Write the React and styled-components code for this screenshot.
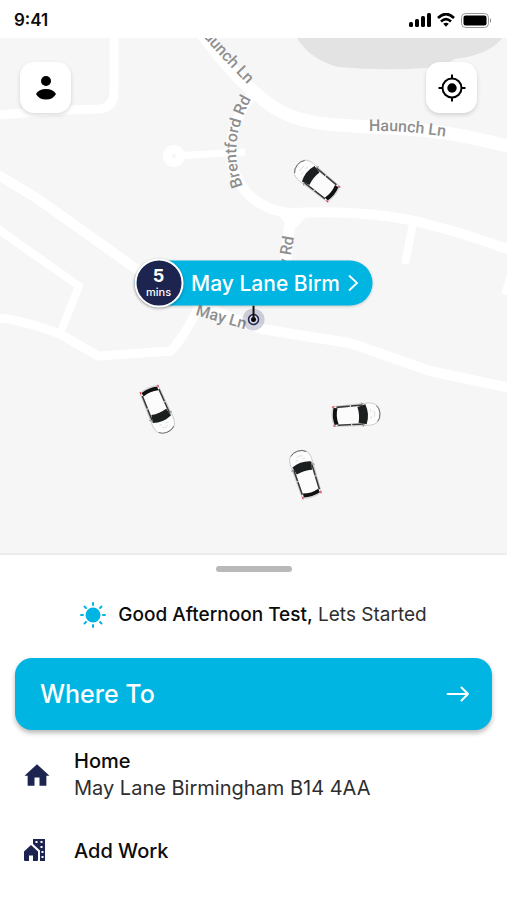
import styled, { createGlobalStyle, css } from "styled-components";

const colors = {
  accent: "#00b5e2",
  navy: "#1d2450",
  text: "#0c0c0c",
  subtle: "#2e2e2e",
  map: "#f6f6f6",
  park: "#e3e3e3",
  road: "#ffffff",
  roadLabel: "#8f8f8f",
};

const GlobalStyles = createGlobalStyle`
  body {
    margin: 0;
    font-family: Inter, "Liberation Sans", sans-serif;
    background-color: #fff;
    color: ${colors.text};
  }
  *, *:before, *:after {
    box-sizing: border-box;
  }
  button {
    margin: 0;
    border: 0;
    font: inherit;
    color: inherit;
    cursor: pointer;
  }
  svg {
    display: block;
    flex-shrink: 0;
  }
`;

const Page = styled.div`
  display: flex;
  flex-direction: column;
  min-height: 100vh;
`;

const StatusBar = styled.header`
  display: flex;
  align-items: center;
  justify-content: space-between;
  height: 38px;
  padding: 2px 15px 0 14px;
`;

const Clock = styled.time`
  font-size: 17px;
  font-weight: 600;
`;

const StatusIcons = styled.div`
  display: flex;
  align-items: center;
  gap: 6px;
`;

const MapArea = styled.main`
  position: relative;
  flex: 1;
  min-height: 320px;
  background-color: ${colors.map};
`;

const MapCanvas = styled.svg`
  position: absolute;
  width: 100%;
  height: 100%;
`;

const RoadLabel = styled.text`
  font-family: Roboto, sans-serif;
  font-size: 16px;
  font-weight: 500;
  fill: ${colors.roadLabel};
`;

const MapButton = styled.button`
  position: absolute;
  top: 24px;
  display: flex;
  align-items: center;
  justify-content: center;
  width: 51px;
  height: 51px;
  padding: 0;
  border-radius: 14px;
  background-color: #fff;
  box-shadow: 0 2px 4px rgba(0, 0, 0, 0.15);
  ${({ $side }) =>
    $side === "left"
      ? css`
          left: 20px;
        `
      : css`
          right: 30px;
        `}
`;

const Pickup = styled.div`
  position: absolute;
  top: 50%;
  left: 50%;
  display: flex;
  flex-direction: column;
  align-items: center;
  transform: translate(-50%, -50%);
`;

const PickupPill = styled.button`
  display: flex;
  align-items: center;
  gap: 8px;
  height: 45px;
  padding: 0 14px 0 0;
  border-radius: 23px;
  background-color: ${colors.accent};
  color: #fff;
  font-size: 21px;
  font-weight: 500;
  white-space: nowrap;
  box-shadow: 0 1px 3px rgba(0, 0, 0, 0.2);
`;

const Eta = styled.span`
  display: flex;
  flex-direction: column;
  align-items: center;
  justify-content: center;
  width: 49px;
  height: 49px;
  border: 2px solid #fff;
  border-radius: 50%;
  background-color: ${colors.navy};
  box-shadow: 0 1px 3px rgba(0, 0, 0, 0.3);
`;

const EtaValue = styled.strong`
  font-size: 18px;
  font-weight: 700;
  line-height: 19px;
`;

const EtaUnit = styled.span`
  font-size: 11px;
  line-height: 15px;
`;

const Sheet = styled.section`
  display: flex;
  flex-direction: column;
  padding: 11px 15px 34px;
  border-top: 2px solid #ececec;
  background-color: #fff;
`;

const Handle = styled.div`
  align-self: center;
  width: 76px;
  height: 6px;
  border-radius: 3px;
  background-color: #b9b9b9;
`;

const Greeting = styled.p`
  display: flex;
  align-items: center;
  justify-content: center;
  gap: 12px;
  margin: 30px 0;
  font-size: 19px;
  line-height: 26px;
  color: ${colors.subtle};
`;

const GreetingName = styled.strong`
  font-weight: 500;
  color: ${colors.text};
`;

const WhereTo = styled.button`
  display: flex;
  align-items: center;
  justify-content: space-between;
  height: 72px;
  padding: 0 22px 0 25px;
  border-radius: 17px;
  background-color: ${colors.accent};
  color: #fff;
  font-size: 25px;
  font-weight: 500;
  box-shadow: 0 3px 5px rgba(0, 0, 0, 0.28);
`;

const Places = styled.div`
  display: flex;
  flex-direction: column;
  gap: 34px;
  padding-top: 18px;
`;

const Place = styled.button`
  display: flex;
  align-items: center;
  gap: 22px;
  padding: 0 7px;
  background: none;
  text-align: left;
`;

const PlaceText = styled.span`
  display: flex;
  flex-direction: column;
  font-size: 20px;
  line-height: 27px;
`;

const PlaceName = styled.span`
  font-weight: 500;
`;

const PlaceAddress = styled.span`
  color: ${colors.subtle};
`;

const roads = [
  { d: "M114 30V92Q114 108 98 109Q50 110 0 115", width: 9 },
  { d: "M174 156L245 152", width: 7 },
  { d: "M196 24C222 62 246 88 272 106C296 124 330 125 370 127C430 129 462 134 515 148", width: 13 },
  { d: "M256 90C226 124 222 168 250 196Q268 212 292 213C350 210 400 216 430 225Q470 235 515 252", width: 10 },
  { d: "M291 213L281 300", width: 11 },
  { d: "M413 224L405 264", width: 8 },
  { d: "M512 272L505 295", width: 8 },
  { d: "M-5 173L38 199L135 268Q190 304 262 329Q310 337 350 343L430 371L515 389", width: 10 },
  { d: "M-5 227L79 286L60 334", width: 8 },
  { d: "M-5 318Q18 318 60 334L98 356L171 351Q186 334 198 308", width: 9 },
];

const cars = [
  { id: "a", x: 316, y: 180, angle: -51 },
  { id: "b", x: 158, y: 410, angle: 157 },
  { id: "c", x: 356, y: 415, angle: 86 },
  { id: "d", x: 305, y: 474, angle: -18 },
];

const Car = ({ x, y, angle }) => (
  <g transform={`translate(${x} ${y}) rotate(${angle})`}>
    <path
      d="M-11 -8C-12 -19 -9 -24 0 -24C9 -24 12 -19 11 -8L10 21Q9 24 0 24Q-9 24 -10 21Z"
      fill="#fcfcfc"
      stroke="#c4c4c4"
      strokeWidth="0.8"
    />
    <path d="M-10 -8L-12 -6M10 -8L12 -6" stroke="#999" strokeWidth="1.2" />
    <path d="M-8 -21Q-5 -24 0 -24Q5 -24 8 -21" fill="none" stroke="#666" strokeWidth="0.9" />
    <path d="M-3 -18Q0 -20 3 -18M-5 -15H-2M2 -15H5" fill="none" stroke="#d9d9d9" strokeWidth="0.8" />
    <path d="M-10 -10Q0 -14 10 -10L8 -2Q0 -4 -8 -2Z" fill="#1c1f20" />
    <path d="M-9.500 -7L-9 19M9.500 -7L9 19" fill="none" stroke="#3a3a3a" strokeWidth="1.6" />
    <path d="M-8 5H-10.500M8 5H10.500" stroke="#ddd" strokeWidth="1.2" />
    <path d="M-8 18Q0 20.500 8 18L8.500 22Q0 24.500 -8.500 22Z" fill="#111" />
    <path d="M-9.500 21V23.500M9.500 21V23.500" stroke="#d8475b" strokeWidth="1.3" />
  </g>
);

const StreetMap = () => (
  <MapCanvas viewBox="0 38 507 515" preserveAspectRatio="xMidYMid slice" aria-hidden="true">
    <path
      d="M296 36C304 52 320 62 338 67Q385 71 425 68Q444 66 455 59Q490 55 504 36Z"
      fill={colors.park}
    />
    <g fill="none" stroke={colors.road} strokeLinejoin="round">
      {roads.map((road) => (
        <path key={road.d} d={road.d} strokeWidth={road.width} />
      ))}
    </g>
    <circle cx="174" cy="156" r="11" fill={colors.road} />
    <circle cx="174" cy="156" r="2" fill={colors.map} />
    <path d="M274 209L312 211L292 232Z" fill={colors.road} />

    <path id="haunch-top" d="M196 28Q220 57 256 93" fill="none" />
    <path id="haunch" d="M369 131Q415 130 470 141" fill="none" />
    <path id="brentford" d="M243 186Q224 138 258 88" fill="none" />
    <path id="may" d="M195 315L262 334" fill="none" />
    <RoadLabel>
      <textPath href="#haunch-top">Haunch Ln</textPath>
    </RoadLabel>
    <RoadLabel>
      <textPath href="#haunch">Haunch Ln</textPath>
    </RoadLabel>
    <RoadLabel>
      <textPath href="#brentford">Brentford Rd</textPath>
    </RoadLabel>
    <RoadLabel>
      <textPath href="#may">May Ln</textPath>
    </RoadLabel>
    <RoadLabel transform="translate(294 237) rotate(-80)" textAnchor="end">
      y Rd
    </RoadLabel>

    {cars.map((car) => (
      <Car key={car.id} x={car.x} y={car.y} angle={car.angle} />
    ))}
  </MapCanvas>
);

const SignalIcon = () => (
  <svg width="22" height="14" viewBox="0 0 22 14" aria-hidden="true">
    <rect x="0" y="9" width="4" height="5" rx="1.500" />
    <rect x="6" y="6" width="4" height="8" rx="1.500" />
    <rect x="12" y="3" width="4" height="11" rx="1.500" />
    <rect x="18" y="0" width="4" height="14" rx="1.500" />
  </svg>
);

const WifiIcon = () => (
  <svg width="18" height="14" viewBox="0 0 18 14" fill="none" stroke="#000" aria-hidden="true">
    <path d="M1 5Q9 -3 17 5" strokeWidth="2.600" />
    <path d="M4 8.500Q9 3.700 14 8.500" strokeWidth="2.500" />
    <path d="M6.200 10.800Q9 8.600 11.800 10.800L9 13.800Z" fill="#000" stroke="none" />
  </svg>
);

const BatteryIcon = () => (
  <svg width="31" height="15" viewBox="0 0 31 15" aria-hidden="true">
    <rect x="0.500" y="0.500" width="27" height="14" rx="4" fill="none" stroke="#9a9a9a" />
    <rect x="2.500" y="2.500" width="23" height="10" rx="2" />
    <path d="M29 5Q31 7.500 29 10Z" fill="#777" />
  </svg>
);

const ProfileIcon = () => (
  <svg width="20" height="24" viewBox="0 0 20 24" aria-hidden="true">
    <circle cx="10" cy="5" r="5" />
    <path d="M0 18Q3 13 10 13Q17 13 20 18Q17 23.500 10 23.500Q3 23.500 0 18Z" />
  </svg>
);

const LocateIcon = () => (
  <svg width="28" height="28" viewBox="0 0 28 28" aria-hidden="true">
    <circle cx="14" cy="14" r="9.500" fill="none" stroke="#000" strokeWidth="2" />
    <circle cx="14" cy="14" r="4.700" />
    <path d="M14 0.500V5M14 23V27.500M0.500 14H5M23 14H27.500" stroke="#000" strokeWidth="2" />
  </svg>
);

const ChevronIcon = () => (
  <svg width="11" height="17" viewBox="0 0 11 17" fill="none" stroke="#fff" aria-hidden="true">
    <path d="M1.500 1L9.500 8.500L1.500 16" strokeWidth="1.800" />
  </svg>
);

const PinIcon = () => (
  <svg width="24" height="26" viewBox="0 0 24 26" aria-hidden="true">
    <circle cx="12" cy="14" r="11" fill={colors.navy} opacity="0.2" />
    <circle cx="12" cy="14" r="5" fill="#d5d6df" stroke={colors.navy} strokeWidth="1.500" />
    <circle cx="12" cy="14" r="2.500" fill="#000" />
    <path d="M12 0V14" stroke="#111" strokeWidth="2" />
  </svg>
);

const SunIcon = () => (
  <svg width="26" height="26" viewBox="0 0 26 26" aria-hidden="true">
    <circle cx="13" cy="13" r="7.500" fill={colors.accent} />
    {[0, 45, 90, 135, 180, 225, 270, 315].map((angle) => (
      <path
        key={angle}
        d="M13 1V3"
        transform={`rotate(${angle} 13 13)`}
        stroke={colors.accent}
        strokeWidth="2"
        strokeLinecap="round"
      />
    ))}
  </svg>
);

const ArrowIcon = () => (
  <svg width="24" height="16" viewBox="0 0 24 16" fill="none" stroke="#fff" aria-hidden="true">
    <path
      d="M1.500 8H22M15.500 1.500L22 8L15.500 14.500"
      strokeWidth="2"
      strokeLinecap="round"
      strokeLinejoin="round"
    />
  </svg>
);

const HomeIcon = () => (
  <svg width="30" height="30" viewBox="0 0 24 24" fill={colors.navy} aria-hidden="true">
    <path d="M10 20.500V14H14V20.500H19.500V12.500H22L12 3.300L2 12.500H4.500V20.500Z" />
  </svg>
);

const WorkIcon = () => (
  <svg width="30" height="30" viewBox="0 0 30 30" fill={colors.navy} aria-hidden="true">
    <path d="M2 15.500L9 9L16 15.500V24Q16 25 15 25H11V19.500H7V25H3Q2 25 2 24Z" />
    <path
      fillRule="evenodd"
      d="M11 3H23V25H18V14.500L11 8ZM13.500 5V7H15.500V5ZM18.500 5V7H20.500V5ZM18.500 10V12H20.500V10ZM19.500 15V17H21.500V15ZM19.500 20V22H21.500V20Z"
    />
  </svg>
);

export default function App() {
  return (
    <>
      <GlobalStyles />
      <Page>
        <StatusBar>
          <Clock>9:41</Clock>
          <StatusIcons>
            <SignalIcon />
            <WifiIcon />
            <BatteryIcon />
          </StatusIcons>
        </StatusBar>

        <MapArea>
          <StreetMap />
          <MapButton $side="left" aria-label="Profile">
            <ProfileIcon />
          </MapButton>
          <MapButton $side="right" aria-label="Locate me">
            <LocateIcon />
          </MapButton>
          <Pickup>
            <PickupPill>
              <Eta>
                <EtaValue>5</EtaValue>
                <EtaUnit>mins</EtaUnit>
              </Eta>
              May Lane Birm
              <ChevronIcon />
            </PickupPill>
            <PinIcon />
          </Pickup>
        </MapArea>

        <Sheet>
          <Handle />
          <Greeting>
            <SunIcon />
            <span>
              <GreetingName>Good Afternoon Test,</GreetingName> Lets Started
            </span>
          </Greeting>
          <WhereTo>
            Where To
            <ArrowIcon />
          </WhereTo>
          <Places>
            <Place>
              <HomeIcon />
              <PlaceText>
                <PlaceName>Home</PlaceName>
                <PlaceAddress>May Lane Birmingham B14 4AA</PlaceAddress>
              </PlaceText>
            </Place>
            <Place>
              <WorkIcon />
              <PlaceText>
                <PlaceName>Add Work</PlaceName>
              </PlaceText>
            </Place>
          </Places>
        </Sheet>
      </Page>
    </>
  );
}
